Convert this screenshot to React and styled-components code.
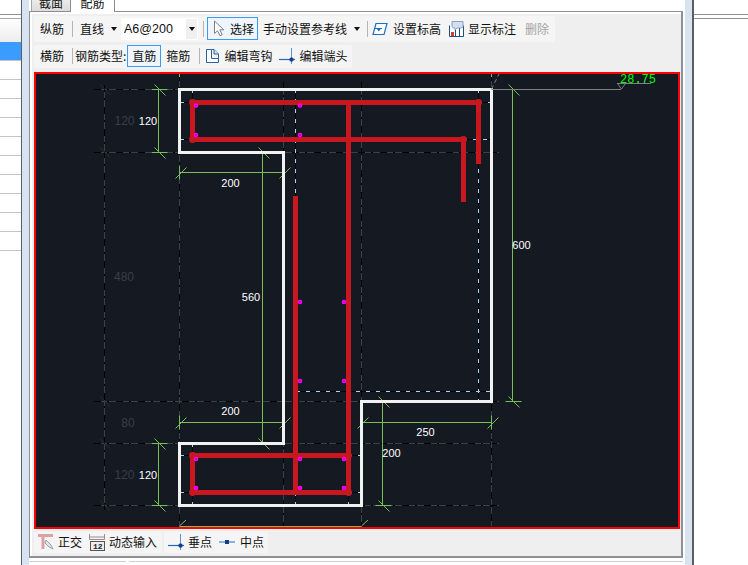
import styled, { createGlobalStyle } from "styled-components";

const GlobalStyle = createGlobalStyle`
  html, body {
    margin: 0;
    padding: 0;
    background: #fff;
  }
`;

const Page = styled.div`
  width: 748px;
  height: 565px;
  display: flex;
  overflow: hidden;
  font-family: "Noto Sans CJK SC", "Liberation Sans", sans-serif;
  font-size: 12px;
  line-height: 16px;
  color: #111;
  background: #fff;
`;

const ListPane = styled.div`
  width: 21px;
  flex: none;
  padding-top: 14px;
  border-right: 1px solid #5d5d66;
`;
const ListLine = styled.div`
  height: 3px;
  border-top: 1px solid #8f8f95;
`;
const ListHead = styled.div`
  height: 23px;
  border-top: 1px solid #a8a8ac;
  background: linear-gradient(#ffffff, #ececec);
`;
const ListRow = styled.div`
  height: 18px;
  border-bottom: 1px solid #c4c4c4;
  background: ${(p) => (p.$selected ? "#3b9bff" : "#fff")};
`;

const Strip = styled.div`
  width: 7px;
  flex: none;
  background: #d7e3f1;
`;

const Main = styled.div`
  width: 656px;
  flex: none;
  display: flex;
  flex-direction: column;
`;

const Tabs = styled.div`
  height: 12px;
  display: flex;
  align-items: flex-end;
  padding-left: 2px;
  overflow: hidden;
  position: relative;
  z-index: 1;
`;
const Tab = styled.div`
  width: ${(p) => (p.$active ? 44 : 40)}px;
  height: 17px;
  flex: none;
  box-sizing: border-box;
  padding-bottom: ${(p) => (p.$active ? 2 : 1)}px;
  text-align: center;
  line-height: 16px;
  border-right: 1px solid #8c8c92;
  border-left: ${(p) => (p.$active ? "none" : "1px solid #a6a6aa")};
  border-bottom: ${(p) => (p.$active ? "none" : "1px solid #8c8c92")};
  background: ${(p) => (p.$active ? "#fff" : "linear-gradient(#f2f2f2, #dcdcdc)")};
`;

const Panel = styled.div`
  width: 654px;
  height: 549px;
  margin-top: -1px;
  box-sizing: border-box;
  padding: 4px 0 0 4px;
  border: 1px solid #8f8f95;
  border-width: 1px 2px 2px 1px;
  background: #efefef;
  box-shadow: inset 0 2px 0 #fff, inset 2px 0 0 #fff;
`;

const Toolbar = styled.div`
  height: ${(p) => p.$height}px;
  width: ${(p) => p.$width}px;
  margin-top: ${(p) => p.$top || 0}px;
  box-sizing: border-box;
  padding-left: 6px;
  display: flex;
  align-items: center;
  background: #f5f5f5;
  border-radius: 2px;
  white-space: nowrap;
`;

const Item = styled.span`
  flex: none;
  display: inline-flex;
  align-items: center;
  margin-left: ${(p) => p.$gap || 0}px;
  color: ${(p) => (p.$muted ? "#a3a3a3" : "inherit")};
`;

const Sep = styled.span`
  flex: none;
  width: 1px;
  height: 16px;
  margin-left: ${(p) => p.$gap || 0}px;
  background: #b4b4b4;
`;

const Caret = styled.span`
  flex: none;
  margin-left: ${(p) => p.$gap || 0}px;
  width: 0;
  height: 0;
  border-left: 3.5px solid transparent;
  border-right: 3.5px solid transparent;
  border-top: 4px solid #111;
`;

const Combo = styled.div`
  flex: none;
  width: 77px;
  height: 22px;
  margin-left: 4px;
  box-sizing: border-box;
  padding-left: 3px;
  display: flex;
  align-items: center;
  justify-content: space-between;
  background: #fff;
  font-family: "Liberation Sans", sans-serif;
  font-size: 12.5px;
`;
const ComboArrow = styled.div`
  width: 11px;
  height: 20px;
  display: flex;
  align-items: center;
  justify-content: center;
  background: #f0f0f0;
  margin-right: 1px;
`;

const ToggleButton = styled.div`
  flex: none;
  box-sizing: border-box;
  width: ${(p) => p.$width}px;
  height: ${(p) => p.$height}px;
  margin-left: ${(p) => p.$gap || 0}px;
  padding-left: ${(p) => p.$pad || 0}px;
  display: flex;
  align-items: center;
  justify-content: ${(p) => (p.$pad ? "flex-start" : "center")};
  border: 1px solid #3a9bf0;
  background: #eef5fc;
`;

const Canvas = styled.div`
  width: 646px;
  height: 457px;
  margin-top: 4px;
  box-sizing: border-box;
  border: 2px solid #ff0000;
  background: #151922;
  svg {
    display: block;
  }
`;

const BottomRow = styled.div`
  display: flex;
  gap: 2px;
  margin-top: 3px;
`;
const BottomBar = styled(Toolbar)`
  padding-left: 4px;
`;

const FooterRow = styled.div`
  display: flex;
  gap: 3px;
  margin-top: 3px;
  width: 654px;
`;
const FooterBox = styled.div`
  height: 3px;
  width: ${(p) => p.$width}px;
  border-top: 1px solid #cfcfcf;
`;

const RightPane = styled.div`
  flex: 1;
  padding-top: 14px;
  border-left: 2px solid #5d5d66;
`;

const DimLabel = styled.text`
  font-family: "Liberation Sans", sans-serif;
  font-size: ${(p) => p.$size || 11}px;
  fill: ${(p) => p.$color || "#fff"};
  text-anchor: middle;
  dominant-baseline: central;
`;
const Elevation = styled.text`
  font-family: "Liberation Mono", monospace;
  font-size: 12px;
  fill: #00ff00;
  dominant-baseline: central;
`;
const TinyDigits = styled.text`
  font-family: "Liberation Mono", monospace;
  font-size: 8px;
  font-weight: bold;
  fill: #222;
`;

const GREEN = "#78bf5a";
const RED = "#c8171e";

// dash-dot axis lines: gray base with black dashes on top
function Axis({ x1, y1, x2, y2 }) {
  return (
    <g>
      <line x1={x1} y1={y1} x2={x2} y2={y2} stroke="#3b4049" />
      <line x1={x1} y1={y1} x2={x2} y2={y2} stroke="#000" strokeDasharray="7 6 2 7" />
    </g>
  );
}

function Guide({ x1, y1, x2, y2 }) {
  return (
    <g>
      <line x1={x1} y1={y1} x2={x2} y2={y2} stroke="#05070a" />
      <line x1={x1} y1={y1} x2={x2} y2={y2} stroke="#a9d3f5" strokeDasharray="4 6" />
    </g>
  );
}

function VDim({ x, y1, y2 }) {
  const tick = (y) => (
    <g key={y}>
      <line x1={x - 7} y1={y} x2={x + 9} y2={y} />
      <line x1={x - 4} y1={y - 5} x2={x + 7} y2={y + 6} />
    </g>
  );
  return (
    <g stroke={GREEN}>
      <line x1={x} y1={y1} x2={x} y2={y2} />
      {tick(y1)}
      {tick(y2)}
    </g>
  );
}

function HDim({ y, x1, x2 }) {
  const tick = (x) => (
    <g key={x}>
      <line x1={x} y1={y - 7} x2={x} y2={y + 7} />
      <line x1={x - 4} y1={y + 6} x2={x + 7} y2={y - 5} />
    </g>
  );
  return (
    <g stroke={GREEN}>
      <line x1={x1} y1={y} x2={x2} y2={y} />
      {tick(x1)}
      {tick(x2)}
    </g>
  );
}

const hAxes = [
  [94, 89.5, 180],
  [94, 152.5, 499],
  [94, 401.5, 499],
  [94, 443.5, 499],
  [94, 505.5, 499],
];
const vAxes = [
  [104.5, 85, 510],
  [179.5, 74, 526],
  [283.5, 82, 526],
  [361.5, 82, 526],
  [491.5, 74, 526],
];
const guides = [
  [192.5, 89, 192.5, 103],
  [295.5, 89, 295.5, 196],
  [478.5, 89, 478.5, 401],
  [180, 102.5, 192, 102.5],
  [478, 102.5, 491, 102.5],
  [180, 139.5, 192, 139.5],
  [463, 139.5, 491, 139.5],
  [296, 391.5, 491, 391.5],
  [180, 455.5, 192, 455.5],
  [348, 455.5, 361, 455.5],
  [180, 492.5, 192, 492.5],
  [348, 492.5, 361, 492.5],
  [192.5, 443, 192.5, 455],
  [192.5, 492, 192.5, 505],
  [295.5, 492, 295.5, 505],
  [348.5, 492, 348.5, 505],
];
const dots = [
  [196, 105.5],
  [196, 135],
  [300, 105.5],
  [300, 135],
  [300, 302],
  [344, 302],
  [300, 381],
  [344, 381],
  [196, 459],
  [196, 488],
  [300, 459],
  [300, 488],
  [344, 459],
  [344, 488],
];
// the bent corners of the bars stick out a little
const bends = [
  [192.5, 102.5],
  [192.5, 139.5],
  [478.5, 102.5],
  [463.5, 139.5],
  [192.5, 455.5],
  [192.5, 492.5],
  [348.5, 455.5],
  [348.5, 492.5],
];

function Drawing() {
  return (
    <svg width="642" height="453" viewBox="36 74 642 453">
      {hAxes.map(([x1, y, x2]) => (
        <Axis key={y} x1={x1} y1={y} x2={x2} y2={y} />
      ))}
      {vAxes.map(([x, y1, y2]) => (
        <Axis key={x} x1={x} y1={y1} x2={x} y2={y2} />
      ))}
      {hAxes.map(([, y]) => (
        <g key={y} stroke="#2c3038">
          <line x1="100" y1={y - 5} x2="110" y2={y + 5} />
        </g>
      ))}
      {guides.map((g) => (
        <Guide key={g.join()} x1={g[0]} y1={g[1]} x2={g[2]} y2={g[3]} />
      ))}

      <VDim x={158.5} y1={89.5} y2={152.5} />
      <VDim x={158.5} y1={443.5} y2={505.5} />
      <VDim x={262.5} y1={152.5} y2={443.5} />
      <VDim x={382.5} y1={401.5} y2={505.5} />
      <VDim x={512.5} y1={89.5} y2={401.5} />
      <HDim y={172.5} x1={179.5} x2={283.5} />
      <HDim y={422.5} x1={179.5} x2={283.5} />
      <HDim y={422.5} x1={361.5} x2={491.5} />
      <g stroke={GREEN}>
        <line x1="179.5" y1="526.5" x2="361.5" y2="526.5" />
        <line x1="179.5" y1="526" x2="186" y2="520" />
        <line x1="361.5" y1="526" x2="368" y2="520" />
        <line x1="179.5" y1="74" x2="179.5" y2="77" />
        <line x1="491.5" y1="74" x2="491.5" y2="77" />
      </g>

      <path
        d="M179.5 89.5H491.5V401.5H361.5V505.5H179.5V443.5H283.5V152.5H179.5Z"
        fill="none"
        stroke="#f2f2f2"
        strokeWidth="3"
      />

      <g fill="none" stroke={RED} strokeWidth="5" strokeLinejoin="round">
        <path d="M192.5 139.5V102.5H478.5V164" />
        <path d="M192.5 139.5H463.5V202" />
        <path d="M348.5 102.5V492" />
        <path d="M295.5 196V492" />
        <path d="M192.5 455.5H348.5V492.5H192.5Z" />
      </g>
      {bends.map(([x, y]) => (
        <circle key={`${x}-${y}`} cx={x} cy={y} r="3.4" fill={RED} />
      ))}
      {dots.map(([x, y]) => (
        <g key={`${x}-${y}`}>
          <circle cx={x} cy={y} r="2.3" fill="#ff00ff" />
          <circle cx={x} cy={y} r="0.8" fill="#8a008a" />
        </g>
      ))}

      <g stroke="#808080" fill="none">
        <path d="M491.5 89.5H621" />
        <path d="M617 83.5H651M617.5 83.5L621.5 89L625.5 83.5" />
        <path d="M491.5 89L499 74" strokeDasharray="4 3" />
      </g>
      <Elevation x="620" y="79.5">28.75</Elevation>

      <DimLabel $size={12} $color="#3a3e46" x="124.5" y="120.5">120</DimLabel>
      <DimLabel $size={12} $color="#3a3e46" x="124" y="277">480</DimLabel>
      <DimLabel $size={12} $color="#3a3e46" x="128" y="423">80</DimLabel>
      <DimLabel $size={12} $color="#3a3e46" x="124.5" y="474.5">120</DimLabel>
      <DimLabel x="148" y="120.5">120</DimLabel>
      <DimLabel x="148" y="474.5">120</DimLabel>
      <DimLabel x="230.5" y="183">200</DimLabel>
      <DimLabel x="230.5" y="411">200</DimLabel>
      <DimLabel x="425.5" y="432">250</DimLabel>
      <DimLabel x="391.5" y="453">200</DimLabel>
      <DimLabel x="251" y="297">560</DimLabel>
      <DimLabel x="521.5" y="245">600</DimLabel>
    </svg>
  );
}

function CursorIcon() {
  return (
    <svg width="12" height="17" viewBox="0 0 12 17">
      <path d="M1.5 1V13.5L4.5 10.8L7 15.8L9.2 14.7L6.8 9.8H10.8Z" fill="#fff" stroke="#7d7d82" />
    </svg>
  );
}
function ElevationIcon() {
  return (
    <svg width="16" height="14" viewBox="0 0 16 14">
      <path d="M4 1.5H15L12 12.5H1Z" fill="#fff" stroke="#1f6fc0" strokeWidth="1.2" />
      <path d="M3 6.5H10" stroke="#1f6fc0" />
      <path d="M4.5 6.5H9L6.8 9.5Z" fill="#1f6fc0" />
    </svg>
  );
}
function ChartIcon() {
  return (
    <svg width="15" height="17" viewBox="0 0 15 17">
      <path d="M0.5 5.5V16.5H14.5V5.5" fill="#fff" stroke="#1d4f86" />
      <path d="M6.5 9V16M10.5 7V16" stroke="#1d4f86" />
      <rect x="2" y="12" width="3" height="4" fill="#d2402a" />
      <path d="M3 1.5H14V6.5C14 8 12 8 11 8H8L6 10V8H5C3.5 8 3 7 3 6Z" fill="#d4dfee" stroke="#8aa0bd" />
    </svg>
  );
}
function HookIcon() {
  return (
    <svg width="15" height="16" viewBox="0 0 15 16">
      <path d="M1.5 1.5H6.5V10.5H13.5V14.5H1.5Z" fill="#fff" stroke="#2a62a8" />
      <path d="M6.5 1.5H9L13.5 6V10.5" fill="none" stroke="#2a62a8" />
      <path d="M9 1.5V6H13.5" fill="#cfe0f3" stroke="#2a62a8" />
    </svg>
  );
}
function EndIcon() {
  return (
    <svg width="16" height="16" viewBox="0 0 16 16">
      <path d="M0 11.5H16" stroke="#2466b8" strokeWidth="1.2" />
      <path d="M12.5 0V16" stroke="#5a93d2" />
      <rect x="10.5" y="9.5" width="4" height="4" rx="1.5" fill="#123f86" />
    </svg>
  );
}
function MidIcon() {
  return (
    <svg width="16" height="8" viewBox="0 0 16 8">
      <path d="M0 4H16" stroke="#5d94d6" strokeWidth="1.4" />
      <rect x="6" y="2" width="4" height="4" fill="#123f86" />
    </svg>
  );
}
function OrthoIcon() {
  return (
    <svg width="16" height="16" viewBox="0 0 16 16">
      <path d="M0 1.5H15M5 1.5V15" stroke="#d9a3a3" strokeWidth="3" fill="none" />
      <path d="M8 6L13 11L15 15L11 13L7 9Z" fill="#dfe3e8" stroke="#8a8f96" strokeWidth="0.8" />
    </svg>
  );
}
function InputIcon() {
  return (
    <svg width="16" height="17" viewBox="0 0 16 17">
      <path d="M0.5 0V5.5H15.5V0M0.5 3H15.5" fill="none" stroke="#a08a8a" />
      <rect x="1.5" y="7.5" width="14" height="9" fill="#eee" stroke="#555" />
      <TinyDigits x="4" y="15">12</TinyDigits>
    </svg>
  );
}

function App() {
  return (
    <Page>
      <GlobalStyle />
      <ListPane>
        <ListLine />
        <ListHead />
        <ListRow $selected />
        {Array.from({ length: 10 }, (_, i) => (
          <ListRow key={i} />
        ))}
      </ListPane>
      <Strip />
      <Main>
        <Tabs>
          <Tab>截面</Tab>
          <Tab $active>配筋</Tab>
        </Tabs>
        <Panel>
          <Toolbar $height={26} $width={521}>
            <Item>纵筋</Item>
            <Sep $gap={8} />
            <Item $gap={7}>直线</Item>
            <Caret $gap={7} />
            <Combo>
              A6@200
              <ComboArrow>
                <Caret />
              </ComboArrow>
            </Combo>
            <Sep $gap={5} />
            <ToggleButton $width={51} $height={23} $gap={3} $pad={5}>
              <CursorIcon />
              <Item $gap={5}>选择</Item>
            </ToggleButton>
            <Item $gap={5}>手动设置参考线</Item>
            <Caret $gap={7} />
            <Sep $gap={7} />
            <Item $gap={4}>
              <ElevationIcon />
            </Item>
            <Item $gap={5}>设置标高</Item>
            <Item $gap={8}>
              <ChartIcon />
            </Item>
            <Item $gap={4}>显示标注</Item>
            <Item $gap={9} $muted>
              删除
            </Item>
          </Toolbar>
          <Toolbar $height={23} $width={318} $top={3}>
            <Item>横筋</Item>
            <Sep $gap={8} />
            <Item $gap={2}>钢筋类型:</Item>
            <ToggleButton $width={34} $height={22} $gap={1}>
              直筋
            </ToggleButton>
            <Item $gap={5}>箍筋</Item>
            <Sep $gap={9} />
            <Item $gap={5}>
              <HookIcon />
            </Item>
            <Item $gap={4}>编辑弯钩</Item>
            <Item $gap={7}>
              <EndIcon />
            </Item>
            <Item $gap={4}>编辑端头</Item>
          </Toolbar>
          <Canvas>
            <Drawing />
          </Canvas>
          <BottomRow>
            <BottomBar $height={21} $width={128}>
              <OrthoIcon />
              <Item $gap={4}>正交</Item>
              <Item $gap={7}>
                <InputIcon />
              </Item>
              <Item $gap={4}>动态输入</Item>
            </BottomBar>
            <BottomBar $height={21} $width={104}>
              <EndIcon />
              <Item $gap={4}>垂点</Item>
              <Item $gap={7}>
                <MidIcon />
              </Item>
              <Item $gap={5}>中点</Item>
            </BottomBar>
          </BottomRow>
        </Panel>
        <FooterRow>
          <FooterBox $width={97} />
          <FooterBox $width={554} />
        </FooterRow>
      </Main>
      <Strip />
      <RightPane>
        <ListLine />
        <ListLine />
      </RightPane>
    </Page>
  );
}

export default App;
